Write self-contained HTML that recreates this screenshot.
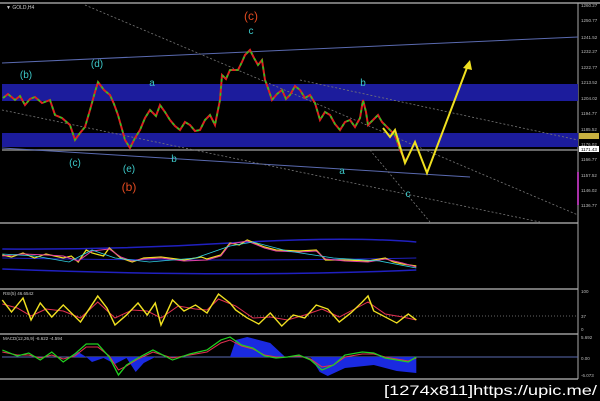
<!DOCTYPE html>
<html><head><meta charset="utf-8"><style>
html,body{margin:0;padding:0;background:#000;width:600px;height:401px;overflow:hidden}
svg{display:block}
text{font-family:"Liberation Sans",sans-serif}
</style></head><body>
<svg width="600" height="401" viewBox="0 0 600 401" xmlns="http://www.w3.org/2000/svg">
<rect width="600" height="401" fill="#000"/>
<g stroke="#9a9a9a" stroke-width="1.5">
<line x1="0" y1="3" x2="600" y2="3"/>
<line x1="0" y1="223" x2="578" y2="223"/>
<line x1="0" y1="289" x2="578" y2="289"/>
<line x1="0" y1="334" x2="578" y2="334"/>
<line x1="0" y1="379" x2="578" y2="379"/>
</g>
<line x1="578" y1="3" x2="578" y2="379" stroke="#aaa" stroke-width="1"/>
<rect x="2" y="84" width="576" height="17" fill="#1c1c9c"/>
<rect x="2" y="133" width="576" height="14" fill="#1c1c9c"/>
<line x1="2" y1="150" x2="578" y2="150" stroke="#888" stroke-width="1.5"/>
<g stroke="#5a6ab0" stroke-width="1" fill="none">
<line x1="2" y1="63" x2="578" y2="37"/>
<line x1="2" y1="148" x2="470" y2="177"/>
</g>
<g stroke="#777" stroke-width="0.8" stroke-dasharray="2,2" fill="none">
<line x1="85" y1="5" x2="578" y2="215"/>
<line x1="2" y1="110" x2="540" y2="222"/>
<line x1="300" y1="80" x2="578" y2="140"/>
<line x1="370" y1="150" x2="430" y2="222"/>
</g>
<polyline fill="none" stroke="#e02020" stroke-width="2" points="3,98 8,94 15,100 20,96 25,105 30,99 35,97 42,103 50,100 55,115 62,118 70,125 75,140 80,133 85,127 90,110 95,92 98,82 104,90 110,95 114,104 118,115 125,140 130,148 135,138 140,130 145,118 150,110 156,116 160,105 165,112 170,120 175,126 180,130 185,122 190,125 195,131 200,130 205,120 210,115 215,125 220,100 222,75 226,79 230,70 238,70 242,62 245,55 250,50 254,58 258,65 262,60 265,80 268,88 272,100 277,94 282,90 286,99 290,95 295,86 300,90 305,98 310,95 315,103 320,120 325,112 330,115 335,124 340,130 345,122 350,120 355,127 360,118 363,100 366,112 368,125 373,120 378,115 382,122 385,125 390,130 395,135 400,150 405,160"/>
<polyline fill="none" stroke="#20d020" stroke-width="1.5" stroke-dasharray="3,4" points="3,98 8,94 15,100 20,96 25,105 30,99 35,97 42,103 50,100 55,115 62,118 70,125 75,140 80,133 85,127 90,110 95,92 98,82 104,90 110,95 114,104 118,115 125,140 130,148 135,138 140,130 145,118 150,110 156,116 160,105 165,112 170,120 175,126 180,130 185,122 190,125 195,131 200,130 205,120 210,115 215,125 220,100 222,75 226,79 230,70 238,70 242,62 245,55 250,50 254,58 258,65 262,60 265,80 268,88 272,100 277,94 282,90 286,99 290,95 295,86 300,90 305,98 310,95 315,103 320,120 325,112 330,115 335,124 340,130 345,122 350,120 355,127 360,118 363,100 366,112 368,125 373,120 378,115 382,122 385,125 390,130 395,135 400,150 405,160"/>
<polyline fill="none" stroke="#f0e020" stroke-width="2" points="383,128 390,137 395,130 405,163 415,142 427,173 468,65"/>
<polygon points="470,60 463,68 472,70" fill="#f0e020"/>
<g font-size="10" fill="#3cc8c8" text-anchor="middle">
<text x="26" y="78">(b)</text><text x="97" y="67">(d)</text><text x="75" y="166">(c)</text>
<text x="129" y="172">(e)</text><text x="152" y="86">a</text><text x="174" y="162">b</text>
<text x="251" y="34">c</text><text x="363" y="86">b</text><text x="342" y="174">a</text><text x="408" y="197">c</text>
</g>
<text x="251" y="20" font-size="12" fill="#e04a20" text-anchor="middle">(c)</text>
<text x="129" y="191" font-size="12" fill="#e04a20" text-anchor="middle">(b)</text>
<text x="6" y="9" font-size="5" fill="#ccc">▼ GOLD,H4</text>
<g font-size="4.5" fill="#bbb">
<text x="581" y="7">1260.27</text><text x="581" y="22">1250.77</text><text x="581" y="39">1241.52</text>
<text x="581" y="53">1232.27</text><text x="581" y="69">1222.77</text><text x="581" y="84">1213.52</text>
<text x="581" y="100">1204.02</text><text x="581" y="115">1194.77</text><text x="581" y="131">1185.52</text>
<text x="581" y="146">1176.02</text><text x="581" y="161">1166.77</text><text x="581" y="177">1157.52</text>
<text x="581" y="192">1146.02</text><text x="581" y="207">1136.77</text>
<text x="581" y="293">100</text><text x="581" y="318">37</text><text x="581" y="331">0</text>
<text x="581" y="339">5.692</text><text x="581" y="360">0.00</text><text x="581" y="377">-6.073</text>
</g>
<rect x="579" y="146" width="20" height="6" fill="#fff"/>
<text x="581" y="151" font-size="4.5" fill="#000">1171.43</text>
<rect x="579" y="133" width="20" height="6" fill="#c8b040"/>
<line x1="578" y1="172" x2="578" y2="205" stroke="#e040e0" stroke-width="1.5"/>
<g transform="scale(1.15,1)">
<g fill="none" stroke-width="1.5" stroke="#2020c0">
<path d="M2,249 Q100,250 200,243 T362,242"/>
<path d="M2,269 Q200,278 362,270"/>
<path d="M2,258 Q200,262 362,258" stroke-width="1"/>
</g>
<polyline fill="none" stroke="#f0e020" stroke-width="1.2" points="2,255 10,257 20,253 30,258 40,254 55,258 62,256 68,262 75,250 80,253 90,256 95,248 105,258 115,262 125,258 140,257 160,260 175,257 180,259 192,255 200,243 208,245 215,240 230,247 240,250 260,251 275,250 283,260 300,260 320,261 335,258 342,262 350,264 362,266"/>
<polyline fill="none" stroke="#e040a0" stroke-width="1" points="2,256 20,254 40,255 55,256 68,261 80,251 95,249 105,257 115,261 125,259 140,258 160,261 180,260 192,256 200,244 215,241 230,248 240,251 260,252 275,251 283,259 300,261 320,262 335,259 350,263 362,267"/>
<polyline fill="none" stroke="#30d0e0" stroke-width="0.8" points="2,254 30,256 60,262 80,250 100,258 130,262 170,258 200,246 220,242 250,251 290,258 330,261 362,268"/>
</g>
<line x1="2" y1="316" x2="578" y2="316" stroke="#666" stroke-dasharray="1,2"/>
<text x="3" y="295" font-size="4.5" fill="#ccc">RSI(5) 46.6542</text>
<g transform="scale(1.15,1)">
<polyline fill="none" stroke="#e03050" stroke-width="1" points="2,304 15,308 27,316 40,309 55,311 70,318 85,302 100,318 115,310 128,311 140,318 155,306 170,309 180,310 190,299 205,306 220,318 235,317 250,320 265,315 280,309 295,317 310,308 320,302 335,314 350,317 362,320"/>
<polyline fill="none" stroke="#f0e020" stroke-width="1.3" points="2,300 10,312 20,298 27,320 35,303 45,317 55,305 70,322 85,296 93,308 100,325 110,315 120,303 128,315 135,303 140,325 150,300 160,311 170,305 180,313 190,294 200,303 205,310 215,318 225,324 235,313 245,326 255,315 265,318 275,305 285,309 295,322 305,313 315,302 320,296 325,311 335,317 345,323 355,314 362,320"/>
</g>
<text x="3" y="340" font-size="4.5" fill="#ccc">MACD(12,26,9) -6.622 -4.594</text>
<line x1="2" y1="357" x2="578" y2="357" stroke="#5a6ab0"/>
<g transform="scale(1.15,1)">
<path d="M60,357 L68,352 75,357 80,362 90,358 100,364 110,358 118,372 125,363 135,357 Z" fill="#1a2ae0"/>
<path d="M200,357 L205,340 215,337 235,343 248,357 Z" fill="#1a2ae0"/>
<path d="M270,357 L362,357 362,373 345,371 325,365 300,368 285,376 278,372 Z" fill="#1a2ae0"/>
<polyline fill="none" stroke="#e03050" stroke-width="1" points="2,352 15,355 25,355 35,358 45,355 55,359 65,356 75,347 85,347 95,356 103,370 110,366 120,359 133,352 150,358 165,355 180,352 192,343 200,340 210,346 220,349 230,355 240,357 250,357 260,356 270,359 280,367 290,365 300,357 315,354 325,354 335,357 345,359 355,361 362,358"/>
<polyline fill="none" stroke="#20d020" stroke-width="1.2" points="2,350 15,356 25,353 35,360 45,352 55,362 65,354 75,344 85,344 95,357 103,375 110,365 120,358 133,350 150,360 165,354 180,350 192,340 200,337 210,345 220,348 230,356 240,358 250,357 260,355 270,360 280,370 290,365 300,355 315,352 325,353 335,358 345,360 355,362 362,357"/>
</g>
<text x="597" y="395" font-size="14" fill="#fff" text-anchor="end" font-family="Liberation Mono,monospace" textLength="213" lengthAdjust="spacingAndGlyphs">[1274x811]https://upic.me/</text>
</svg>
</body></html>
